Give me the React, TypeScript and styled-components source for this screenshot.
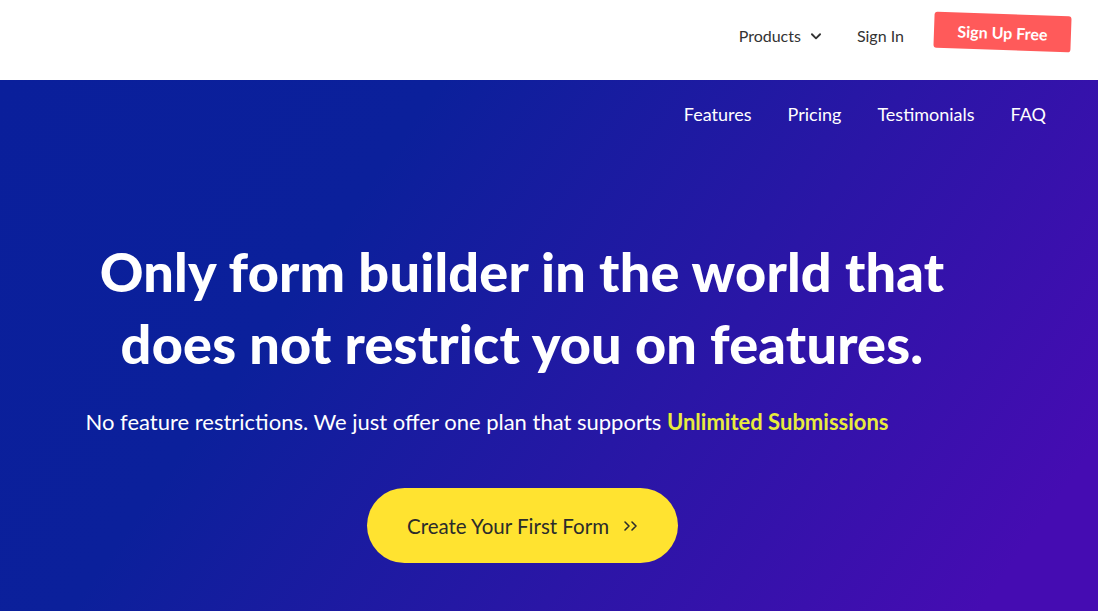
import styled, { createGlobalStyle } from "styled-components";

const GlobalStyle = createGlobalStyle`
  html, body {
    margin: 0;
    padding: 0;
    background: #fff;
  }
  body {
    font-family: Lato, "Open Sans", sans-serif;
  }
  * {
    box-sizing: border-box;
  }
`;

const ChevronDown = () => (
  <svg width="14" height="14" viewBox="0 0 24 24" fill="none">
    <path d="M5 9l7 7 7-7" stroke="#333" strokeWidth="3.2" strokeLinecap="round" strokeLinejoin="round" />
  </svg>
);

const DoubleChevron = () => (
  <svg width="16" height="12" viewBox="0 0 16 12" fill="none">
    <path d="M2 2l4 4-4 4M9 2l4 4-4 4" stroke="#2b2b2b" strokeWidth="1.6" strokeLinecap="round" strokeLinejoin="round" />
  </svg>
);

const App = () => {
  return (
    <Page>
      <GlobalStyle />
      <Header>
        <TopLink>
          Products <ChevronDown />
        </TopLink>
        <TopLink>Sign In</TopLink>
        <SignUp>Sign Up Free</SignUp>
      </Header>
      <Hero>
        <SubNav>
          <a>Features</a>
          <a>Pricing</a>
          <a>Testimonials</a>
          <a>FAQ</a>
        </SubNav>
        <Content>
          <Title>
            Only form builder in the world that
            <br />
            does not restrict you on features.
          </Title>
          <Lead>
            No feature restrictions. We just offer one plan that supports{" "}
            <span>Unlimited Submissions</span>
          </Lead>
          <Cta>
            Create Your First Form <DoubleChevron />
          </Cta>
        </Content>
      </Hero>
    </Page>
  );
};
export default App;

const Page = styled.div`
  width: 100%;
  min-height: 611px;
  overflow: hidden;
`;

const Header = styled.header`
  height: 80px;
  background: #fff;
  display: flex;
  align-items: center;
  justify-content: flex-end;
  padding: 0 27px 10px 0;
`;

const TopLink = styled.a`
  display: flex;
  align-items: center;
  gap: 8px;
  font-size: 16px;
  color: #333;
  margin-right: 34px;
  svg {
    margin-top: 2px;
  }
  &:nth-child(2) {
    margin-right: 30px;
  }
`;

const SignUp = styled.a`
  display: flex;
  align-items: center;
  justify-content: center;
  width: 137px;
  height: 36px;
  background: #ff5a5a;
  color: #fff;
  font-size: 16px;
  font-weight: 700;
  border-radius: 3px;
  transform: rotate(2deg);
  margin-top: -6px;
`;

const Hero = styled.section`
  height: 531px;
  background: linear-gradient(125deg, #0a1f9b 0%, #0b209b 30%, #2a16a6 62%, #450cb2 92%);
  display: flex;
  flex-direction: column;
`;

const SubNav = styled.nav`
  display: flex;
  justify-content: flex-end;
  gap: 36px;
  padding: 23px 52px 0 0;
  a {
    color: #fff;
    font-size: 18px;
  }
`;

const Content = styled.div`
  display: flex;
  flex-direction: column;
  align-items: center;
  padding: 111px 54px 0 0;
`;

const Title = styled.h1`
  margin: 0;
  color: #fff;
  font-size: 54px;
  font-weight: 900;
  line-height: 72px;
  text-align: center;
  letter-spacing: 0.2px;
`;

const Lead = styled.p`
  margin: 27px 70px 0 0;
  color: #fff;
  font-size: 22px;
  line-height: 30px;
  span {
    color: #e8ec3c;
    font-weight: 700;
  }
`;

const Cta = styled.a`
  margin-top: 51px;
  width: 311px;
  height: 75px;
  border-radius: 38px;
  background: #ffe330;
  color: #2b2b2b;
  font-size: 20.5px;
  display: flex;
  align-items: center;
  justify-content: center;
  gap: 14px;
  padding-left: 2px;
`;
